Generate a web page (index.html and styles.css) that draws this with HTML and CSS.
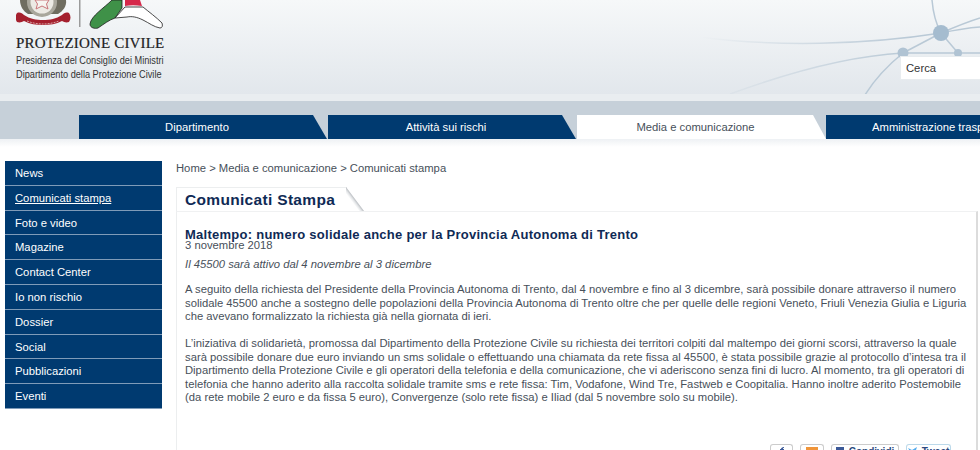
FILE: index.html
```html
<!DOCTYPE html>
<html lang="it">
<head>
<meta charset="utf-8">
<title>Comunicati Stampa</title>
<link rel="stylesheet" href="styles.css">
</head>
<body>
<header class="masthead">
  <div class="brand">
    <svg class="emblems" width="150" height="30" viewBox="0 0 150 30">
      <path d="M4 0c0 6 3 11 8 14h30c5-3 9-8 8-14z" fill="#6f6d60"/>
      <circle cx="26" cy="2" r="15" fill="#a9a79c"/>
      <circle cx="26" cy="2" r="11.5" fill="#eceae4"/>
      <path d="M19 0h14l-2.500 4 1.500 5-6-3-6 3 1.500-5z" fill="#f6f4f0" stroke="#c9767a"/>
      <path d="M1 13c3-1 5 0 7 2 6 4 12 5 19 5s13-1 19-5c2-2 4-3 7-2 2 3 2 6 0 9-3 1-5 0-7-1-6 3-12 4-19 4s-13-1-19-4c-2 1-4 2-7 1-2-3-2-6 0-9z" fill="#a5202e"/>
      <path d="M11 21c5 2 11 3 16 3s11-1 16-3" fill="none" stroke="#d9a5a5" stroke-width="1" stroke-dasharray="2 1"/>
      <rect x="63" y="0" width="1.500" height="27" fill="#9b9b9b"/>
      <path d="M109 0h15l2 6c-6-1-12-1-17 0z" fill="#d6284a"/>
      <path d="M96 0C88 8 75 16 74 24c0 4 5 5 8 4 6-4 11-8 17-10l7-10V0z" fill="#3f9148" stroke="#1d1d1d" stroke-width=".8"/>
      <path d="M109 7h18c6 5 13 10 19 16 1 3 0 5-2 5-6-1-11-5-17-8-6-3-11-4-16-3-4 0-8 1-12 1z" fill="#fff" stroke="#1d1d1d" stroke-width=".8"/>
    </svg>
    <div class="brand-name">PROTEZIONE CIVILE</div>
    <div class="brand-sub">Presidenza del Consiglio dei Ministri</div>
    <div class="brand-sub">Dipartimento della Protezione Civile</div>
  </div>
  <svg class="network" width="330" height="94" viewBox="0 0 330 94">
    <defs>
      <linearGradient id="fade" gradientUnits="userSpaceOnUse" x1="50" y1="0" x2="260" y2="0">
        <stop offset="0" stop-color="#b9c9d6" stop-opacity="0"/>
        <stop offset="1" stop-color="#b9c9d6"/>
      </linearGradient>
    </defs>
    <g fill="none" stroke="url(#fade)" stroke-width="1.500">
      <path d="M50 37c75 10 165 8 241-4"/>
      <path d="M80 94c60-22 120-38 173-41"/>
    </g>
    <g fill="none" stroke="#b9c9d6" stroke-width="1.500">
      <path d="M282 0c1 12 4 24 9 33"/>
      <path d="M291 33c14-6 26-11 39-15"/>
      <path d="M291 33c14-3 26-5 39-6"/>
      <path d="M291 33l-38 20"/>
      <path d="M291 33l17 20"/>
      <path d="M253 53h77"/>
      <path d="M212 100c10-18 25-34 41-47"/>
    </g>
    <circle cx="291" cy="33" r="8" fill="#a5bccf"/>
    <circle cx="253" cy="53" r="5.500" fill="#b0c3d3"/>
    <circle cx="308" cy="53" r="4" fill="#b0c3d3"/>
  </svg>
  <div class="search">Cerca</div>
</header>
<div class="strip"></div>
<nav class="tabs">
  <a class="tab">Dipartimento</a>
  <a class="tab">Attività sui rischi</a>
  <a class="tab active">Media e comunicazione</a>
  <a class="tab last">Amministrazione trasparente</a>
</nav>
<div class="main">
  <ul class="side">
    <li>News</li>
    <li class="current">Comunicati stampa</li>
    <li>Foto e video</li>
    <li>Magazine</li>
    <li>Contact Center</li>
    <li>Io non rischio</li>
    <li>Dossier</li>
    <li>Social</li>
    <li>Pubblicazioni</li>
    <li>Eventi</li>
  </ul>
  <div class="content">
    <div class="crumbs">Home &gt; Media e comunicazione &gt; Comunicati stampa</div>
    <div class="panel-head"><h1>Comunicati Stampa</h1></div>
    <article class="panel">
      <h2>Maltempo: numero solidale anche per la Provincia Autonoma di Trento</h2>
      <div class="date">3 novembre 2018</div>
      <p class="lead">Il 45500 sarà attivo dal 4 novembre al 3 dicembre</p>
      <p>A seguito della richiesta del Presidente della Provincia Autonoma di Trento, dal 4 novembre e fino al 3 dicembre, sarà possibile donare attraverso il numero<br>solidale 45500 anche a sostegno delle popolazioni della Provincia Autonoma di Trento oltre che per quelle delle regioni Veneto, Friuli Venezia Giulia e Liguria<br>che avevano formalizzato la richiesta già nella giornata di ieri.</p>
      <p>L’iniziativa di solidarietà, promossa dal Dipartimento della Protezione Civile su richiesta dei territori colpiti dal maltempo dei giorni scorsi, attraverso la quale<br>sarà possibile donare due euro inviando un sms solidale o effettuando una chiamata da rete fissa al 45500, è stata possibile grazie al protocollo d’intesa tra il<br>Dipartimento della Protezione Civile e gli operatori della telefonia e della comunicazione, che vi aderiscono senza fini di lucro. Al momento, tra gli operatori di<br>telefonia che hanno aderito alla raccolta solidale tramite sms e rete fissa: Tim, Vodafone, Wind Tre, Fastweb e Coopitalia. Hanno inoltre aderito Postemobile<br>(da rete mobile 2 euro e da fissa 5 euro), Convergenze (solo rete fissa) e Iliad (dal 5 novembre solo su mobile).</p>
      <div class="share">
        <span class="btn small"><svg width="10" height="6" viewBox="0 0 10 6"><path d="M4 6V3H3V2h1c0-1 1-2 3-2v1C6 1 6 1 6 2h1v1H6v3z" fill="#3b5998"/></svg></span>
        <span class="btn small b2"><svg width="12" height="6" viewBox="0 0 12 6"><rect width="12" height="6" fill="#f0953a"/></svg></span>
        <span class="btn wide"><svg width="8" height="6" viewBox="0 0 8 6"><rect width="8" height="6" fill="#3b5998"/></svg><span class="btn-text">Condividi</span></span>
        <span class="btn tweet"><svg width="9" height="6" viewBox="0 0 9 6"><path d="M0 1l4 2 5-3-2 6H3z" fill="#55acee"/></svg><span class="btn-text">Tweet</span></span>
      </div>
    </article>
  </div>
</div>
</body>
</html>
```
FILE: styles.css
```css
* { box-sizing: border-box; }
html, body { margin: 0; padding: 0; height: 450px; overflow: hidden; background: #fff; }
body { font-family: "Liberation Sans", Arial, sans-serif; font-size: 11.25px; color: #47505a; width: 980px; }

.masthead {
  position: relative;
  height: 94px;
  background: linear-gradient(180deg, #f6f8f9 0%, #e2e7ec 100%);
  overflow: hidden;
  padding-left: 16px;
}
.emblems { display: block; }
.brand { width: 160px; }
.brand-name {
  font-family: "Liberation Serif", serif;
  font-size: 15px;
  line-height: 16px;
  letter-spacing: 0.18px;
  color: #222;
  -webkit-text-stroke: 0.2px #222;
  margin-top: 5px;
  white-space: nowrap;
}
.brand-sub {
  font-size: 10.500px;
  line-height: 13.500px;
  color: #333;
  white-space: nowrap;
  transform-origin: left;
  transform: scaleX(0.875);
}
.brand-name + .brand-sub { margin-top: 3px; }
.network { position: absolute; right: 0; top: 0; }
.search {
  position: absolute;
  left: 900px;
  top: 56px;
  width: 80px;
  height: 24px;
  background: #fff;
  border: 1px solid #e8ecef;
  border-right: 0;
  color: #333;
  font-size: 11.25px;
  line-height: 22px;
  padding-left: 5px;
}
.strip { height: 7px; background: #e9edf0; }
.tabs {
  height: 38px;
  background: #c6d0d9;
  padding: 14px 0 0 79px;
  display: flex;
  gap: 1px;
  overflow: hidden;
  position: relative;
}
.tab {
  flex: 0 0 248px;
  height: 24px;
  background: #003a70;
  color: #fff;
  font-size: 11.25px;
  line-height: 24px;
  text-align: center;
  clip-path: polygon(0 0, 234px 0, 100% 100%, 0 100%);
  padding-right: 12px;
}
.tab.active { background: #fff; color: #47505a; flex-basis: 249px; clip-path: polygon(0 0, 236px 0, 100% 100%, 0 100%); padding-right: 12px; }
.tab.last { flex: 0 0 auto; width: 154px; margin-left: -1px; clip-path: none; padding: 0 0 0 46px; white-space: nowrap; text-align: left; overflow: hidden; }

.main {
  display: flex;
  background: linear-gradient(180deg, #eef1f4 0, #fff 8px);
  padding: 22px 0 0 5px;
  height: 311px;
}
.side { list-style: none; margin: 0; padding: 0; width: 157px; flex: none; align-self: flex-start; }
.side li {
  height: 24.800px;
  background: #003a70;
  border-bottom: 1px solid #7f9bb8;
  color: #fff;
  line-height: 25px;
  padding-left: 10px;
}
.side li.current { text-decoration: underline; }
.content { margin: 0 2px 0 14px; flex: 1; min-width: 0; }
.crumbs { line-height: 14px; }
.panel-head { margin-top: 12px; height: 24px; position: relative; }
.panel-head h1 {
  position: relative;
  display: inline-block;
  margin: 0;
  height: 24px;
  padding: 0 12px 0 8px;
  font-size: 15.500px;
  font-weight: bold;
  letter-spacing: 0.32px;
  line-height: 24px;
  color: #0f2a55;
  background: #fff;
  border-top: 1px solid #eceeef;
  border-left: 1px solid #eceeef;
}
.panel-head h1::after {
  content: "";
  position: absolute;
  left: 169px;
  top: -1px;
  width: 18px;
  height: 24px;
  background: linear-gradient(to top right, #ffffff 0 36%, #e6e8ea 43%, #b9bdc1 50%);
  clip-path: polygon(0 0, 100% 100%, 0 100%);
}
.panel {
  border-left: 1px solid #eceeef;
  border-right: 2px solid #dcdcdc;
  padding: 17px 0 0 8px;
  height: 239px;
  position: relative;
  white-space: nowrap;
  border-top: 1px solid #f0f1f2;
}
.panel h2 {
  margin: 0;
  font-size: 13px;
  line-height: 12px;
  letter-spacing: 0.26px;
  color: #0f2a55;
}
.date { line-height: 11px; margin-top: -1px; }
.panel p { margin: 13.500px 0 0; line-height: 13.500px; }
.panel .lead { margin-top: 6px; font-style: italic; line-height: 14px; }
.panel .lead + p { margin-top: 12px; }
.share { position: absolute; right: 25px; top: 232px; display: flex; gap: 7px; }
.btn {
  display: flex;
  align-items: flex-start;
  justify-content: center;
  gap: 5px;
  height: 12px;
  width: 23px;
  padding-top: 2px;
  border: 1px solid #ccc;
  border-bottom: 0;
  border-radius: 3px 3px 0 0;
  background: #fff;
  font-size: 10px;
  line-height: 10px;
  overflow: hidden;
}
.btn.b2 { width: 24px; }
.btn.wide { width: 68px; }
.btn.tweet { width: 45px; border-color: #bcd9ea; }
.btn-text { color: #2c4a80; font-weight: bold; }
```
